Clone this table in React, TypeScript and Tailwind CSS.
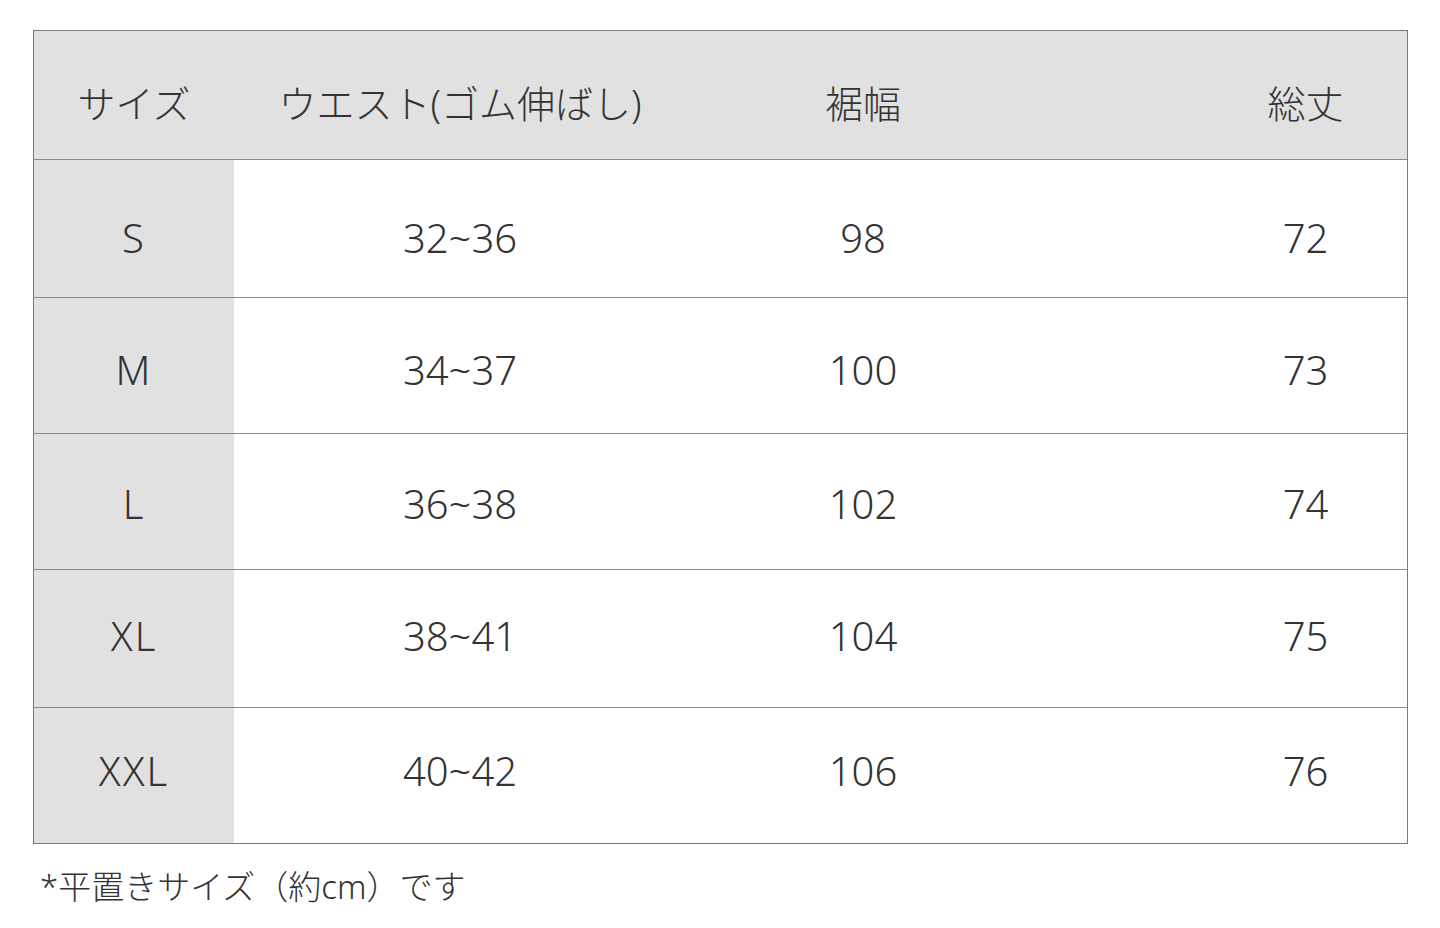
import React from "react";

const rows = [
  ["S", "32~36", "98", "72"],
  ["M", "34~37", "100", "73"],
  ["L", "36~38", "102", "74"],
  ["XL", "38~41", "104", "75"],
  ["XXL", "40~42", "106", "76"],
];
const heights = ["h-[138px]", "h-[136px]", "h-[136px]", "h-[138px]", "h-[135px]"];
const offsets = ["pt-[18px]", "pt-[8px]", "pt-[4px]", "pb-[6px]", "pb-[10px]"];

export default function App() {
  return (
    <div
      className="w-[1440px] h-[928px] bg-white text-[#333333]"
      style={{ fontFamily: '"Noto Sans", "Noto Sans CJK JP", sans-serif' }}
    >
      <div className="pt-[30px] pl-[33px]">
        <div className="w-[1375px] border border-[#7a7a7a]">
          <div className="grid grid-cols-[200px_452px_354px_1fr] h-[129px] pt-[16px] bg-[#e1e1e1] border-b border-[#8e8985] items-center text-[38px] font-light">
            <div className="text-center">サイズ</div>
            <div className="text-center">ウエスト(ゴム伸ばし)</div>
            <div className="text-center">裾幅</div>
            <div className="text-center pl-[164px]">総丈</div>
          </div>
          {rows.map((r, i) => (
            <div
              key={r[0]}
              className={`grid grid-cols-[200px_452px_354px_1fr] ${heights[i]} ${
                i < rows.length - 1 ? "border-b border-[#8e8985]" : ""
              } text-[40px] font-light`}
            >
              <div className={`bg-[#e1e1e1] flex items-center justify-center tracking-[2px] ${offsets[i]}`}>{r[0]}</div>
              <div className={`flex items-center justify-center ${offsets[i]}`}>{r[1]}</div>
              <div className={`flex items-center justify-center ${offsets[i]}`}>{r[2]}</div>
              <div className={`flex items-center justify-center pl-[164px] ${offsets[i]}`}>{r[3]}</div>
            </div>
          ))}
        </div>
        <div className="pt-[26px] pl-[7px] text-[33px] font-light leading-none">*平置きサイズ（約cm）です</div>
      </div>
    </div>
  );
}
